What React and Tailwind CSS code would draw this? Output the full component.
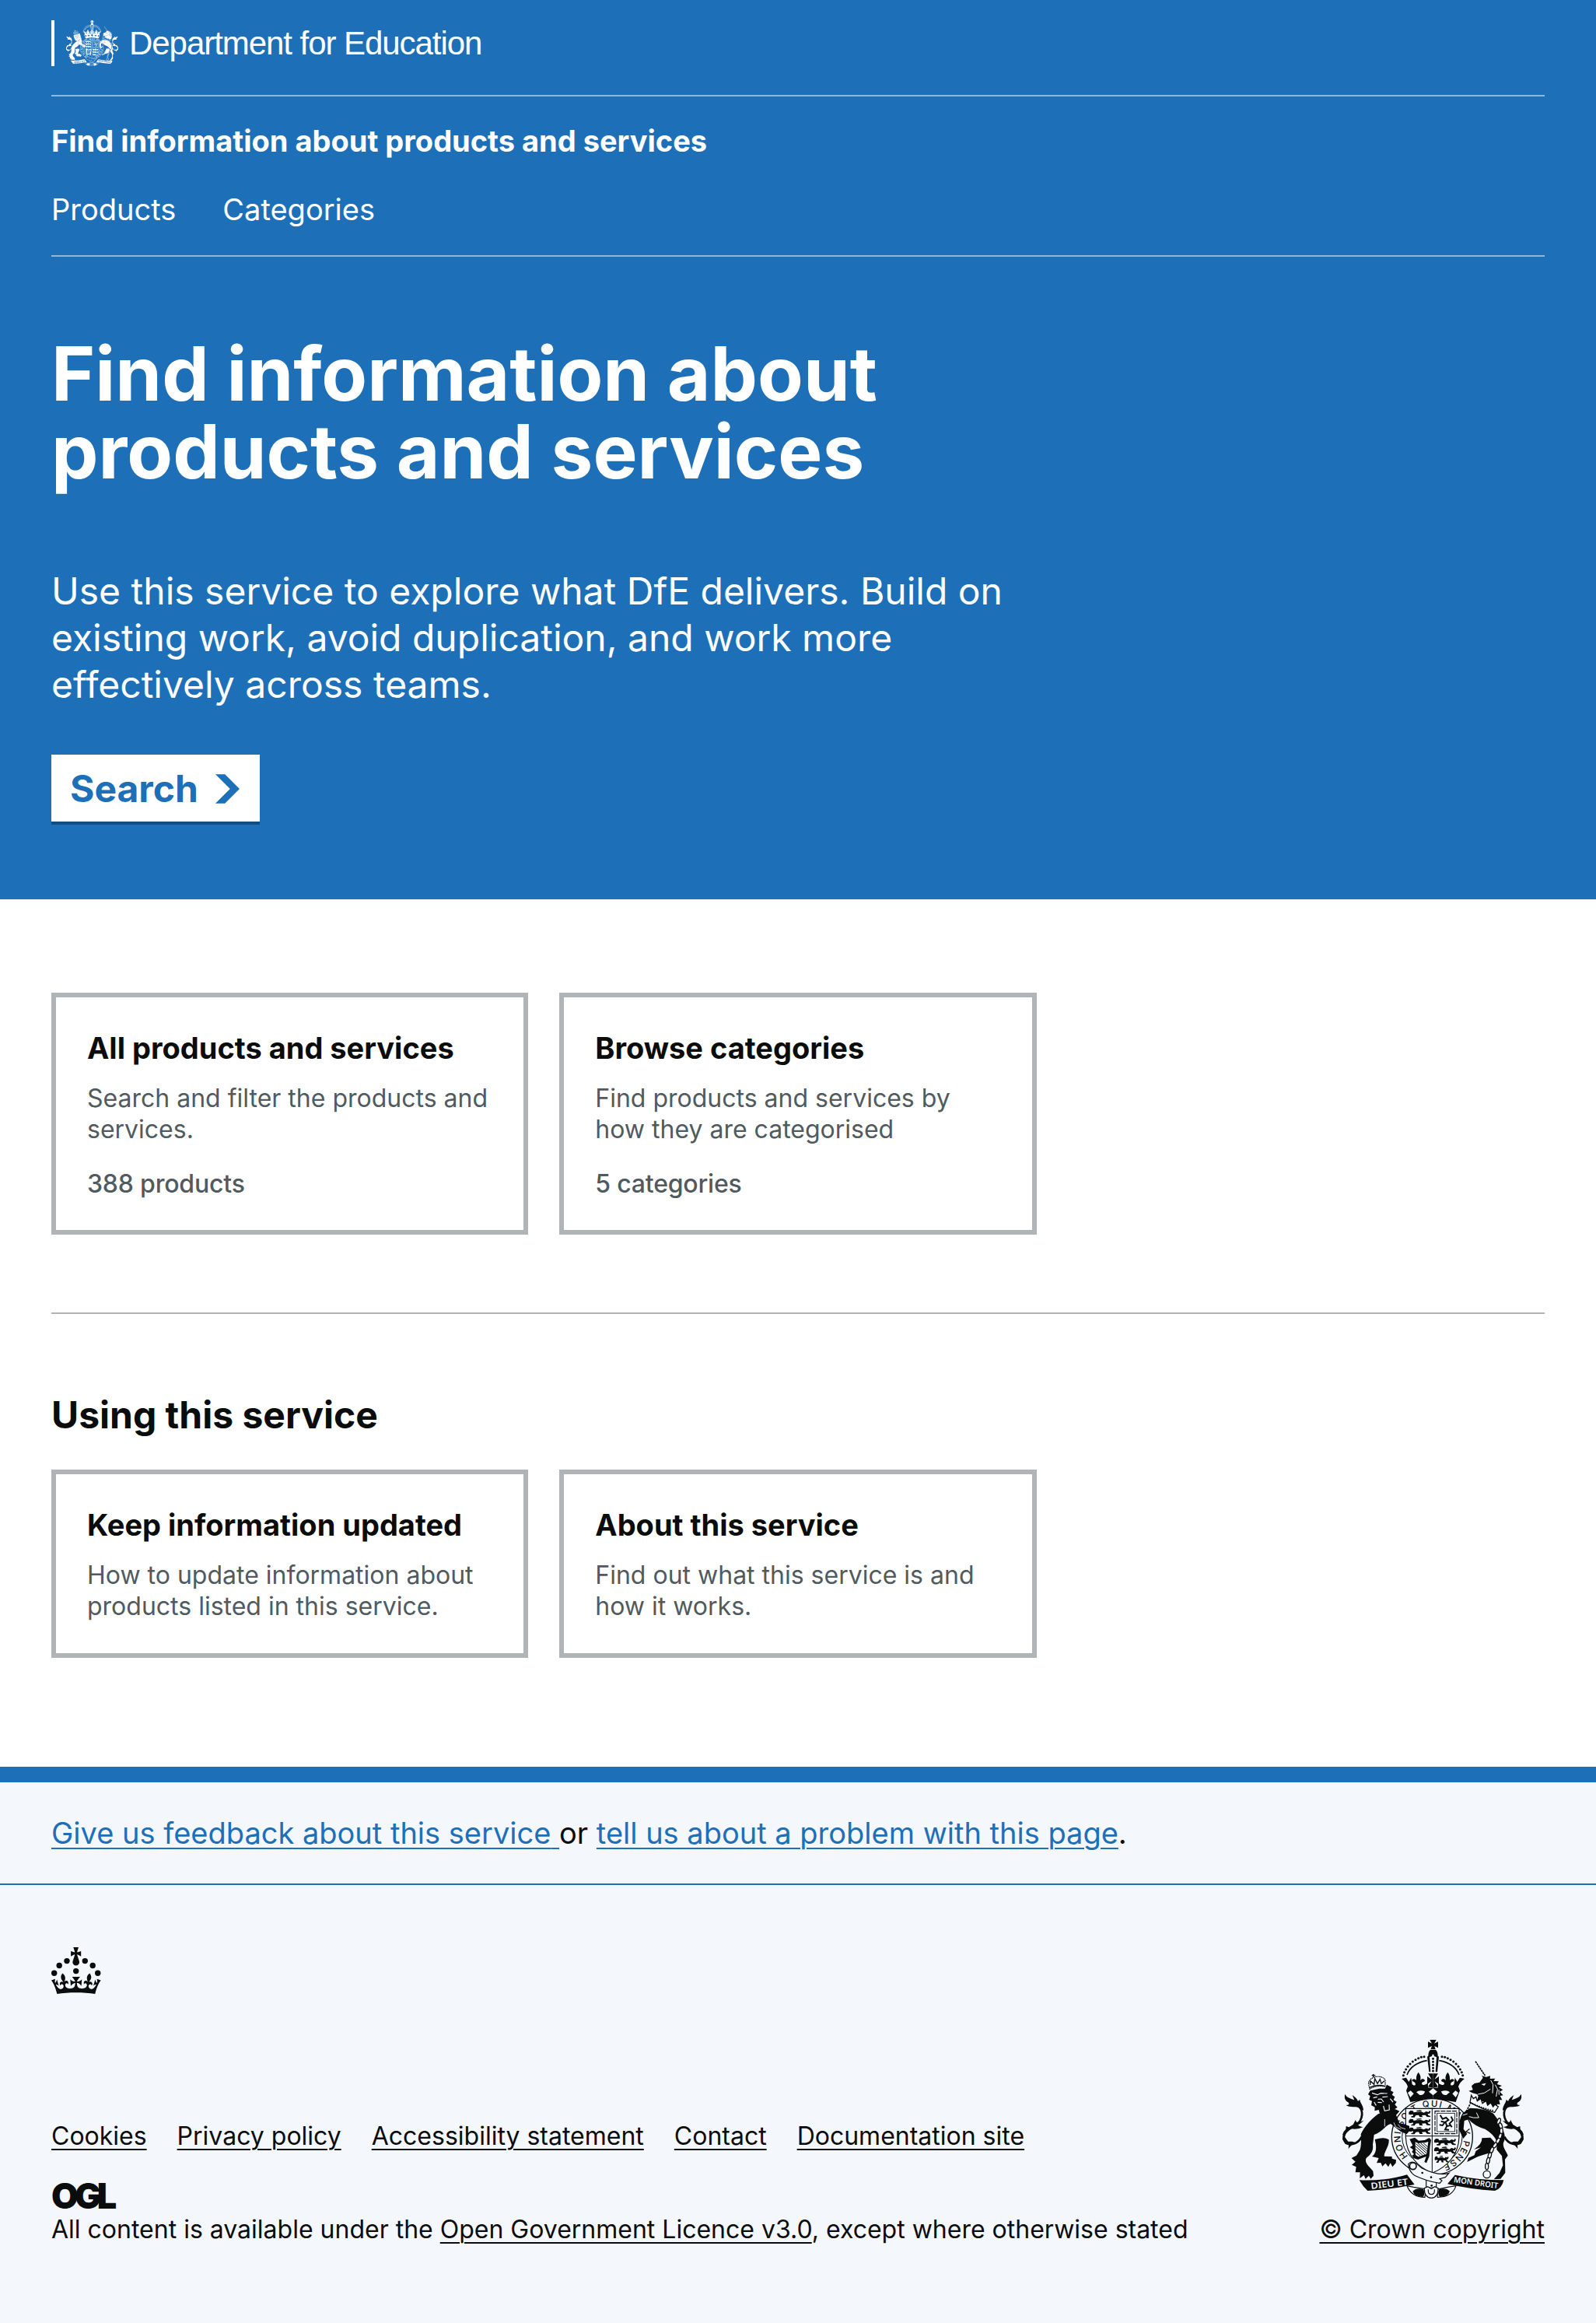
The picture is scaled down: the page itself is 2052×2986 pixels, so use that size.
const navLinks = ['Products', 'Categories'];

const productCards = [
  {
    title: 'All products and services',
    text: 'Search and filter the products and services.',
    count: '388 products',
  },
  {
    title: 'Browse categories',
    text: 'Find products and services by how they are categorised',
    count: '5 categories',
  },
];

const serviceCards = [
  {
    title: 'Keep information updated',
    text: 'How to update information about products listed in this service.',
  },
  {
    title: 'About this service',
    text: 'Find out what this service is and how it works.',
  },
];

const footerLinks = [
  'Cookies',
  'Privacy policy',
  'Accessibility statement',
  'Contact',
  'Documentation site',
];

const linkClass = 'underline decoration-2 underline-offset-[5px]';

// points along each half arch of the crown
const pearls = [
  [375, 203], [379, 191], [385, 180], [392, 169], [401, 159],
  [411, 150], [422, 143], [433, 137], [444, 133], [455, 131],
];

const chain = [
  [743, 380, 20], [750, 398, -20], [753, 418, 0], [748, 438, 20], [740, 456, 30],
  [728, 473, 35], [716, 491, 20], [708, 512, 15], [702, 532, 10], [697, 554, 0],
];

function ShieldLion({ x, y }) {
  return (
    <g transform={`translate(${x} ${y})`}>
      <path d="M0 6 L6 0 L16 1 L19 7 L30 5 L47 4 L58 8 L67 3 L76 6 L80 0 L84 4 L80 12 L72 12 L76 19 L84 21 L82 25 L70 24 L64 17 L50 18 L54 25 L42 25 L38 17 L27 18 L22 26 L10 26 L9 22 L17 20 L16 14 L8 16 L0 15 Z" />
      <path d="M28 0 L44 -2 L50 0 L48 2 L32 3 Z" />
    </g>
  );
}

function HalfCrown() {
  return (
    <g>
      {pearls.map(([x, y]) => (
        <circle key={x} cx={x} cy={y} r="4.6" />
      ))}
      <path
        d="M389 201 Q406 157 466 146"
        fill="none"
        stroke="currentColor"
        strokeWidth="5"
      />
      <path d="M368 216 L386 212 L396 228 L405 212 L409 238 C417 245 424 242 421 233 C417 226 410 229 408 222 C413 215 421 218 425 222 C424 210 425 202 433 191 C442 202 443 211 440 222 C446 214 456 215 458 223 C456 230 449 227 446 233 C446 242 458 243 470 232 L470 250 L489.500 252 L489.500 304 Q440 297 402 306 L386 262 L392 246 Q387 230 368 216 Z" />
      <path d="M470 196 L489.500 196 L489.500 252 L470 247 L484 226 L467 237 L467 207 L484 219 Z" />
    </g>
  );
}

function Tail() {
  return (
    <g>
      <path
        d="M214 440 C200 470 164 476 150 458 C136 432 158 412 183 401 C214 386 225 350 206 324"
        fill="none"
        stroke="currentColor"
        strokeWidth="8"
      />
      <path d="M150 275 C157 291 174 292 186 298 L178 279 C188 286 196 292 200 303 L207 296 C208 309 221 319 221 338 L208 334 C198 316 174 332 154 318 C166 318 168 313 162 307 C150 300 146 290 150 275 Z" />
      <path d="M191 374 C192 386 197 386 222 377 Q208 391 200 394 Q208 404 220 402 Q196 414 176 409 Q157 414 148 438 L140 432 Q142 420 153 411 L154 399 L165 403 L181 393 Z" />
      <path d="M142 433 L140 450 L151 468 L164 472 L163 486 L174 473 L196 464 L178 458 L162 458 L152 445 Z" />
    </g>
  );
}

function RoyalArms({ className, ground, id }) {
  return (
    <svg viewBox="110 66 750 612" className={className} fill="currentColor" aria-hidden="true">
      {/* crown */}
      <HalfCrown />
      <g transform="translate(979 0) scale(-1 1)">
        <HalfCrown />
      </g>
      <path d="M477 66 H502 L494 80 L509 73 V97 L495 90 L499 103 H480 L485 90 L470 97 V73 L485 80 Z" />
      <path d="M479 105 H500 Q508 112 508 128 L512 131 L506 190 H499 L503 133 Q489 124 476 133 L480 190 H474 L467 131 L471 128 Q471 112 479 105 Z" />
      {[139, 151, 163, 175, 186].map((y) => (
        <circle key={y} cx="489.500" cy={y} r="4.500" />
      ))}
      <g fill={ground}>
        <circle cx="489.500" cy="126" r="4" />
        <path d="M473 266 L489.500 253 L506 266 L489.500 280 Z" />
        <path d="M425 268 Q436 258 458 265 Q456 280 438 279 Z M554 268 Q543 258 521 265 Q523 280 541 279 Z" />
        <path d="M392 270 L403 262 L415 274 L402 288 Z M587 270 L576 262 L564 274 L577 288 Z" />
      </g>

      {/* garter */}
      <ellipse cx="486" cy="440" rx="156" ry="147" fill={ground} stroke="currentColor" strokeWidth="4" />
      <ellipse cx="486" cy="440" rx="116" ry="110" fill="none" stroke="currentColor" strokeWidth="3" />
      <path id={`${id}-motto`} d="M396 518 A122 116 0 1 1 535 546" fill="none" />
      <text fontFamily="Inter, sans-serif" fontSize="34" fontWeight="500">
        <textPath href={`#${id}-motto`} startOffset="4" textLength="600">
          HONI SOIT QUI MAL Y PENSE
        </textPath>
      </text>

      {/* shield */}
      <path d="M384 331 H590 V440 C588 510 544 556 486 580 C430 556 387 510 384 440 Z" fill={ground} stroke="currentColor" strokeWidth="3.500" />
      <path d="M486 331 V580 M384 437 H590" stroke="currentColor" strokeWidth="3" />
      <ShieldLion x={396} y={339} />
      <ShieldLion x={396} y={371} />
      <ShieldLion x={396} y={404} />
      <g transform="translate(494 443)">
        <ShieldLion x={0} y={4} />
        <ShieldLion x={0} y={37} />
        <g transform="translate(2 72) scale(.64 .95)">
          <ShieldLion x={0} y={0} />
        </g>
      </g>
      <g fill="none" stroke="currentColor">
        <rect x="497" y="341" width="84" height="87" strokeWidth="3.500" strokeDasharray="18 4" />
        <rect x="505" y="349" width="68" height="71" strokeWidth="2.500" />
        <path d="M517 356 L526 371 L540 366 L549 375 L535 384 L520 380 M538 384 L543 399 L558 395 M535 384 L526 396 L514 394 M543 398 L536 412 L551 413 M559 362 L566 376 L553 389 L562 403" strokeWidth="6" />
      </g>
      <path d="M399 449 L419 443 L434 455 L457 453 L475 444 L482 452 L478 476 L475 515 L464 541 L456 537 L463 516 L431 528 L414 522 L409 512 L416 507 L408 498 L413 490 L400 480 L411 473 Z" />
      <path d="M421 460 L432 465 L460 462 L471 459 L465 506 L433 517 L422 510 Z" fill={ground} />
      <path d="M424 467 L466 505 M422 476 L458 509 M422 487 L450 512 M421 498 L441 515 M432 466 L467 496 M442 465 L468 488 M452 464 L469 479" stroke="currentColor" strokeWidth="3" />

      {/* lion */}
      <Tail />
      <path d="M247 262 L239 276 L247 283 L243 297 L254 302 L251 318 L265 326 L264 340 L280 336 L284 351 L300 347 L330 362 L346 343 L342 333 L352 326 L342 316 L349 305 L337 298 L342 286 L331 278 L337 268 L326 262 L329 248 L311 239 L304 254 L282 254 Z" />
      <path d="M278 352 L301 345 L330 360 L343 333 L360 341 L347 356 L360 388 L377 391 L398 398 L398 418 L388 430 L365 420 L326 390 C302 397 300 419 262 432 L257 470 C261 496 247 510 232 522 C223 540 244 555 258 572 L260 590 L249 602 L242 590 L229 602 L223 588 L207 600 L208 577 L190 577 L193 556 L176 548 L190 536 L175 522 L194 512 L207 491 Q214 473 211 430 C225 400 252 371 278 352 Z" />
      <path d="M265 450 Q302 439 319 451 C321 477 301 496 301 515 L331 516 L331 524 L347 529 L346 541 L333 556 L325 541 L317 556 L306 542 L294 554 L288 540 L272 541 L280 522 L254 516 Q278 500 265 450 Z" />
      <path d="M254 271 L275 278 L288 272 L313 273 M259 290 L274 286 M294 287 L315 285 M277 295 L290 294 L299 306 M276 307 L292 308 M298 321 L303 340 L321 336 L320 316 M324 293 L335 306 M262 306 L270 319" fill="none" stroke={ground} strokeWidth="3.500" />
      <path d="M303 372 L303 400 M338 385 L346 402 L366 411 M354 392 L366 405 L383 410" fill="none" stroke={ground} strokeWidth="2.500" />
      <path d="M245 256 Q272 239 305 247 L305 220 Q293 204 264 209 Q238 220 241 238 Z" fill={ground} stroke="currentColor" strokeWidth="3.500" strokeDasharray="5 2" />
      <path d="M244 250 Q270 237 303 244 M247 240 L248 225 L262 238 L265 215 L275 235 L285 218 L290 235 L302 224 M259 198 V210 M253 203 H267" fill="none" stroke="currentColor" strokeWidth="4" />

      {/* unicorn */}
      <g transform="translate(979 0) scale(-1 1)">
        <Tail />
      </g>
      <path d="M653 149 L690 204" stroke="currentColor" strokeWidth="5" strokeDasharray="8 2" />
      <path d="M638 244 L649 234 L669 230 L682 212 L677 205 L695 209 L710 205 L709 216 L729 215 L723 225 L743 226 L736 237 L755 243 L743 249 L759 259 L747 266 L760 280 L748 282 L756 298 L744 298 L748 315 L736 314 L738 331 L709 322 L681 303 L660 296 L664 284 L660 276 L641 271 L627 263 L643 259 Z" />
      <path d="M662 276 L687 271 L711 256 M712 222 L721 239 L719 272 M729 239 L738 256 L733 285 M743 258 L744 278" fill="none" stroke={ground} strokeWidth="3" />
      <path d="M675 237 L694 233 L687 243 Z" fill={ground} />
      <path d="M637 280 L632 307 Q678 334 727 346 L741 324 L728 315 L721 324 L712 308 L700 318 L694 301 L680 311 L674 292 L660 302 L655 286 L645 293 Z" fill={ground} stroke="currentColor" strokeWidth="4" />
      <path d="M640 311 Q687 333 724 339" fill="none" stroke="currentColor" strokeWidth="5" strokeDasharray="5 4" />
      <path d="M604 349 L632 329 Q690 330 722 350 Q747 382 753 401 Q775 439 761 463 C757 482 772 493 778 512 L767 527 L768 579 L750 602 L724 604 L746 579 L759 550 L755 514 L735 490 L735 457 Q724 430 690 410 Q650 400 627 373 L610 378 L607 410 L621 429 L606 447 L590 413 Q589 371 604 349 Z" />
      <path d="M678 445 L711 443 L728 462 L711 501 L663 516 L621 537 L626 521 L649 511 L654 496 L674 481 L647 489 Q680 467 678 445 Z" />
      <path d="M628 362 Q645 369 666 366 L657 347 M604 357 L622 351" fill="none" stroke={ground} strokeWidth="3" />
      <path d="M636 306 L621 336 L612 348" fill="none" stroke="currentColor" strokeWidth="5" strokeDasharray="8 3" />
      {chain.map(([x, y, angle]) => (
        <ellipse key={y} cx={x} cy={y} rx="6" ry="12" transform={`rotate(${angle} ${x} ${y})`} fill={ground} stroke="currentColor" strokeWidth="4" />
      ))}
      <circle cx="697" cy="585" r="14" fill={ground} stroke="currentColor" strokeWidth="4" />

      {/* scroll and strap */}
      <path d="M205 607 Q310 611 389 586 L418 624 Q330 643 237 648 Q218 631 205 607 Z" />
      <path d="M574 587 Q660 607 762 607 Q755 640 728 648 Q630 642 545 622 Z" />
      <g fill={ground} fontFamily="'Noto Sans', sans-serif" fontSize="34" fontWeight="600">
        <text x="251" y="642" textLength="144" lengthAdjust="spacingAndGlyphs" transform="rotate(-7 251 642)">DIEU ET</text>
        <text x="568" y="615" textLength="172" lengthAdjust="spacingAndGlyphs" transform="rotate(8 568 615)" fontSize="30">MON DROIT</text>
      </g>
      <g fill={ground} stroke="currentColor" strokeWidth="3.500">
        <path d="M389 629 Q407 673 458 673 L461 641 L414 634 Z M578 629 Q564 673 507 673 L505 643 L546 634 Z" />
        <path d="M463 596 V636 H502 V596 Z" />
        <path d="M394 545 Q397 578 421 590 Q464 611 515 619 L524 609 L515 602 L537 596 L551 580 Q511 593 445 560 L424 542 Q405 532 394 545 Z" />
        <path d="M456 638 Q455 674 483 676 Q510 674 509 638 L496 632 L483 641 L469 632 Z" />
        <path d="M471 643 Q469 662 483 662 Q497 662 495 643" />
        <circle cx="412" cy="553" r="13" strokeWidth="5" />
      </g>
      <path d="M411 650 Q424 636 452 641 Q462 658 450 672 Q417 669 411 650 Z M554 650 Q541 636 514 641 Q504 658 516 672 Q549 669 554 650 Z" />
      <circle cx="448" cy="579" r="4" />
      <circle cx="482" cy="596" r="4" />
      <circle cx="484" cy="628" r="4" />
    </svg>
  );
}

function Crown() {
  return (
    <svg viewBox="0 0 64 60" className="h-[60px] w-16" fill="currentColor" aria-hidden="true">
      <circle cx="20" cy="17.6" r="3.7" />
      <circle cx="10.2" cy="23.5" r="3.7" />
      <circle cx="3.7" cy="33.2" r="3.7" />
      <circle cx="31.7" cy="30.6" r="3.7" />
      <circle cx="43.3" cy="17.6" r="3.7" />
      <circle cx="53.2" cy="23.5" r="3.7" />
      <circle cx="59.7" cy="33.2" r="3.7" />
      <path d="M33.1,9.8c.2-.1.3-.3.5-.5l4.6,2.4v-6.8l-4.6,1.5c-.1-.2-.3-.3-.5-.5l1.9-5.9h-6.7l1.9,5.9c-.2.1-.3.3-.5.5l-4.6-1.5v6.8l4.6-2.4c.1.2.3.3.5.5l-2.6,8c-.9,2.8,1.2,5.7,4.1,5.7h0c3,0,5.1-2.9,4.1-5.7l-2.6-8ZM37,37.9s-3.4,3.8-4.1,6.1c2.2,0,4.2-.5,6.4-2.8l-.7,8.5c-2-2.8-4.4-4.1-5.7-3.8.1,3.1.5,6.7,5.8,7.2,3.7.3,6.7-1.5,7-3.8.4-2.6-2-4.3-3.7-1.6-1.4-4.5,2.4-6.1,4.9-3.2-1.9-4.5-1.8-7.7,2.4-10.9,3,4,2.6,7.3-1.2,11.1,2.4-1.3,6.2,0,4,4.6-1.2-2.8-3.7-2.2-4.2.2-.3,1.7.7,3.7,3,4.2,1.9.3,4.7-.9,7-5.9-1.3,0-2.4.7-3.9,1.7l2.4-8c.6,2.3,1.4,3.7,2.2,4.5.6-1.6.5-2.8,0-5.3l5,1.8c-2.6,3.6-5.2,8.7-7.3,17.5-7.4-1.1-15.7-1.7-24.5-1.7h0c-8.8,0-17.1.6-24.5,1.7-2.1-8.9-4.7-13.9-7.3-17.5l5-1.8c-.5,2.5-.6,3.7,0,5.3.8-.8,1.6-2.3,2.2-4.5l2.4,8c-1.5-1-2.6-1.7-3.9-1.7,2.3,5,5.2,6.2,7,5.9,2.3-.4,3.3-2.4,3-4.2-.5-2.4-3-3.1-4.2-.2-2.2-4.6,1.6-6,4-4.6-3.7-3.7-4.2-7.1-1.2-11.1,4.2,3.2,4.3,6.4,2.4,10.9,2.5-2.8,6.3-1.3,4.9,3.2-1.8-2.7-4.1-1-3.7,1.6.3,2.3,3.3,4.1,7,3.8,5.4-.5,5.7-4.2,5.8-7.2-1.3-.2-3.7,1-5.7,3.8l-.7-8.5c2.2,2.3,4.2,2.7,6.4,2.8-.7-2.3-4.1-6.1-4.1-6.1h10.6,0Z" />
    </svg>
  );
}

function Card({ title, text, count }) {
  return (
    <a href="#" className="block w-[613.3px] border-[6px] border-[#b1b4b6] p-10">
      <h3 className="text-[38px] leading-[50px] font-bold text-[#0b0c0c]">{title}</h3>
      <p className="mt-5 text-[32px] leading-10 text-[#505a5f]">{text}</p>
      {count && (
        <p className="mt-[30px] -mb-px text-[32px] leading-10 font-medium tracking-[-0.2px] text-[#505a5f]">
          {count}
        </p>
      )}
    </a>
  );
}

export default function App() {
  return (
    <div className="min-h-[2986px] bg-[#f4f7fc] font-['Inter',sans-serif] text-[#0b0c0c] antialiased">
      <header className="h-[1156px] bg-[#1d70b8] px-[66px] text-white">
        <div className="flex h-[124px] items-start border-b-2 border-white/50 pt-[26px]">
          <div className="h-[59px] w-1 bg-white" />
          <RoyalArms id="header" className="ml-3 h-[59px] w-[72px]" ground="#1d70b8" />
          <span className="ml-3 pt-1 font-['Liberation_Sans',Arial,sans-serif] text-[42px] leading-[52px] tracking-[-1.05px] whitespace-nowrap">
            Department for Education
          </span>
        </div>
        <div className="border-b-2 border-white/50 pt-8 pb-[34px]">
          <a href="#" className="block text-[38px] leading-[50px] font-bold">
            Find information about products and services
          </a>
          <nav className="mt-[38px] flex gap-[60px] text-[38px] leading-[50px]">
            {navLinks.map((label) => (
              <a key={label} href="#">
                {label}
              </a>
            ))}
          </nav>
        </div>
        <h1 className="mt-[100px] w-[1260px] text-[96px] leading-[100px] font-bold">
          Find information about
          <br />
          products and services
        </h1>
        <p className="mt-[100px] w-[1260px] text-[48px] leading-[60px]">
          Use this service to explore what DfE delivers. Build on existing work, avoid duplication,
          and work more effectively across teams.
        </p>
        <a
          href="#"
          className="mt-[60px] flex h-[86px] w-[268px] items-center justify-between bg-white pt-0.5 pr-[26px] pl-6 text-[48px] font-bold text-[#1d70b8] shadow-[0_4px_0_#144e81]"
        >
          Search
          <svg viewBox="0 0 33 40" className="h-[38px] w-[31px]" fill="currentColor" aria-hidden="true">
            <path d="M0 0h13l20 20-20 20H0l20-20z" />
          </svg>
        </a>
      </header>

      <main className="bg-white px-[66px] pt-[120px] pb-[140px]">
        <div className="flex gap-10">
          {productCards.map((card) => (
            <Card key={card.title} {...card} />
          ))}
        </div>
        <hr className="mt-[100px] border-t-2 border-[#b1b4b6]" />
        <h2 className="mt-[100px] text-[48px] leading-[60px] font-bold">Using this service</h2>
        <div className="mt-10 flex gap-10">
          {serviceCards.map((card) => (
            <Card key={card.title} {...card} />
          ))}
        </div>
      </main>

      <div className="border-t-[20px] border-b-2 border-[#1d70b8] px-[66px] py-10 text-[38px] leading-[50px]">
        <a href="#" className={`text-[#1d70b8] ${linkClass}`}>
          Give us feedback about this service{' '}
        </a>
        or{' '}
        <a href="#" className={`text-[#1d70b8] ${linkClass}`}>
          tell us about a problem with this page
        </a>
        .
      </div>

      <footer className="px-[66px] pt-20 pb-[100px] text-[32px] leading-10">
        <Crown />
        <div className="mt-[59px] flex items-end justify-between">
          <div>
            <ul className="flex gap-[39px]">
              {footerLinks.map((label) => (
                <li key={label}>
                  <a href="#" className={linkClass}>
                    {label}
                  </a>
                </li>
              ))}
            </ul>
            <div className="mt-[37px] mb-[3px] flex h-10 items-center text-[45px] font-black tracking-[-5px]">
              OGL
            </div>
            <p>
              All content is available under the{' '}
              <a href="#" className={linkClass}>
                Open Government Licence v3.0
              </a>
              , except where otherwise stated
            </p>
          </div>
          <a href="#" className={`flex flex-col items-center ${linkClass}`}>
            <RoyalArms id="footer" className="mb-5 h-[204px] w-[250px]" ground="#f4f7fc" />
            <span>© Crown copyright</span>
          </a>
        </div>
      </footer>
    </div>
  );
}
